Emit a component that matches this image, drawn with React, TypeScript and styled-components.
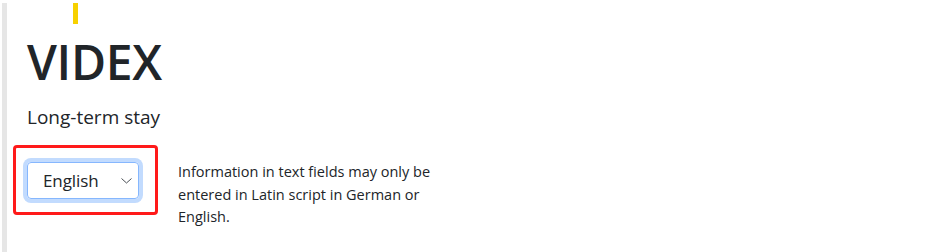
import React from "react"
import styled, { createGlobalStyle } from "styled-components"

const GlobalStyle = createGlobalStyle`
  html, body {
    margin: 0;
    padding: 0;
    background: #ffffff;
  }
  body {
    font-family: "Open Sans", "Noto Sans", Arial, sans-serif;
    color: #212529;
  }
`

const Page = styled.div`
  display: flex;
  min-height: 252px;
`

const Rail = styled.div`
  flex: 0 0 5px;
  margin-left: 2px;
  margin-top: 3px;
  background: #e6e6e6;
`

const Content = styled.main`
  padding-left: 20px;
  display: flex;
  flex-direction: column;
`

const Flag = styled.div`
  width: 5px;
  height: 21px;
  margin-top: 3px;
  margin-left: 46px;
  background: #f7d100;
`

const Title = styled.h1`
  margin: 9px 0 0;
  font-size: 48px;
  font-weight: 600;
  line-height: 1.2;
  letter-spacing: -0.3px;
`

const Subtitle = styled.p`
  margin: 15px 0 0;
  font-size: 19px;
  line-height: 1.2;
`

const Row = styled.div`
  display: flex;
  align-items: flex-start;
  margin-top: 17px;
`

const Highlight = styled.div`
  margin-left: -14px;
  padding: 14px 16px 13px 11px;
  border: 3px solid #ff1a1a;
  border-radius: 4px;
`

const Select = styled.div`
  box-sizing: border-box;
  display: flex;
  align-items: center;
  justify-content: space-between;
  width: 112px;
  height: 37px;
  padding: 0 6px 0 15px;
  border: 1px solid #86b7fe;
  border-radius: 4px;
  box-shadow: 0 0 0 4px #c2dbfe;
  font-size: 17px;
  letter-spacing: -0.1px;
  color: #212529;
`

const Chevron = () => (
  <svg width="11" height="6" viewBox="0 0 11 6" fill="none">
    <path d="M0.5 0.5 L5.5 5 L10.5 0.5" stroke="#4a4f55" strokeWidth="1" />
  </svg>
)

const Note = styled.p`
  width: 268px;
  margin: 16px 0 0 20px;
  font-size: 14.5px;
  line-height: 22.5px;
`

export default function App() {
  return (
    <>
      <GlobalStyle />
      <Page>
        <Rail />
        <Content>
          <Flag />
          <Title>VIDEX</Title>
          <Subtitle>Long-term stay</Subtitle>
          <Row>
            <Highlight>
              <Select>
                English
                <Chevron />
              </Select>
            </Highlight>
            <Note>
              Information in text fields may only be entered in Latin script in
              German or English.
            </Note>
          </Row>
        </Content>
      </Page>
    </>
  )
}
